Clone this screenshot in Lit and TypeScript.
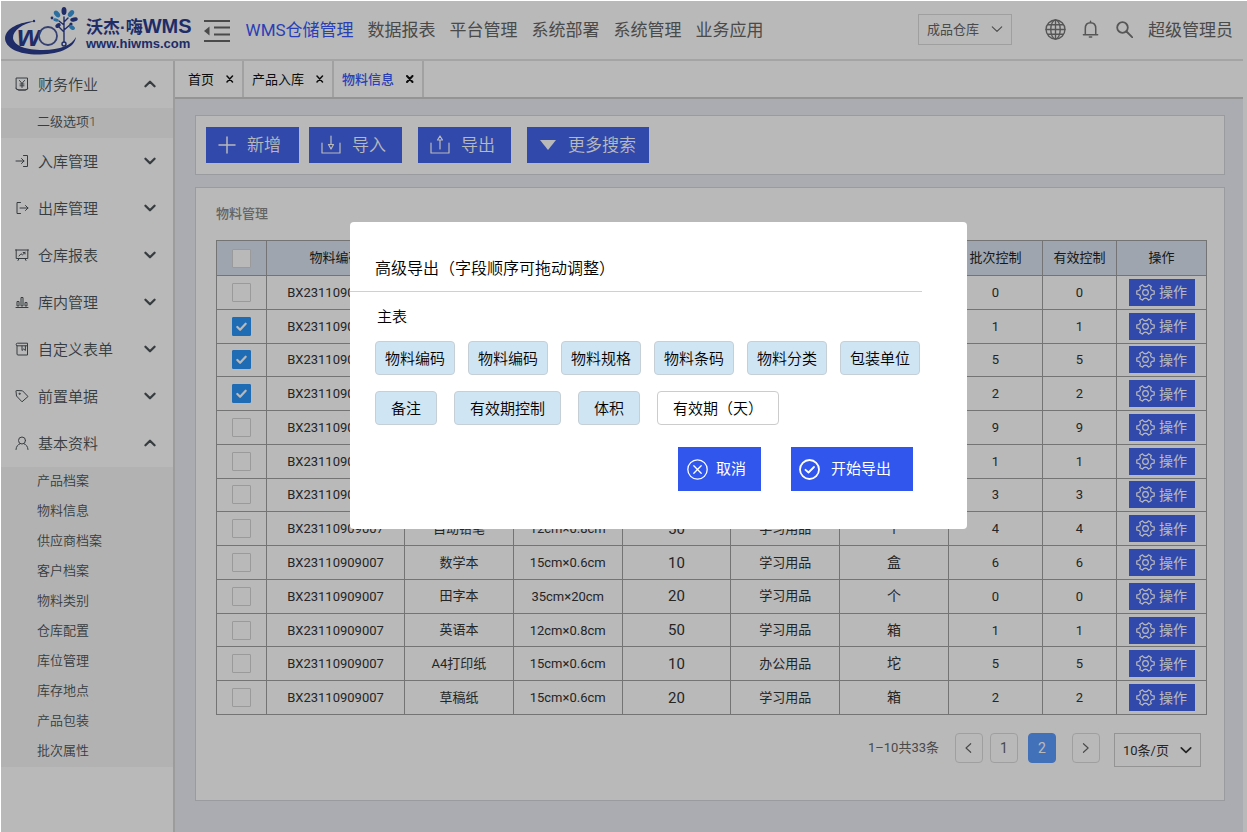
import { LitElement, html, svg, css, nothing } from "lit";
import { customElement, property, state } from "lit/decorators.js";
import { classMap } from "lit/directives/class-map.js";

const stroke = (body: unknown, size = 14, width = 1, box = 14) => html`
  <svg width=${size} height=${size} viewBox="0 0 ${box} ${box}" fill="none" stroke="currentColor"
    stroke-width=${width} stroke-linecap="round" stroke-linejoin="round" aria-hidden="true">${body}</svg>`;

const menuIcons: Record<string, unknown> = {
  finance: svg`<path d="M1.500 1h11v11L10 13H4l-2.500-1z M1 11.500l2 1.500h8l2-1.500M4.500 3.500L7 6.500l2.500-3M7 6.500V10.500M5 7h4M5 8.800h4"/>`,
  inbound: svg`<path d="M1 7h8M6.500 4.500L9 7 6.500 9.500M8.500 1.500h4v11h-4"/>`,
  outbound: svg`<path d="M5.500 1.500h-3.500v11h3.500M5 7h8M10.500 4.500L13 7l-2.500 2.500"/>`,
  report: svg`<path d="M.5 2h13M1.200 2v8.500h11.600V2M4 8l2-2.200 1.500 1L10 4.500M8.200 4.500H10V6M4 10.500l-1 2M10 10.500l1 2"/>`,
  inside: svg`<path d="M1 12.500h12M2 10.500v-4h2v4zM6 10.500v-8h2v8zM10 10.500v-3h2v3z"/>`,
  form: svg`<path d="M2 3.500V12a1 1 0 0 0 1 1h9.500V3.800H2.500a1.200 1.200 0 0 1 0-2.600h10v2.600M7 4v4.500l1.700-1.500 1.700 1.500V4"/>`,
  tag: svg`<path d="M1 2.200L1.500 7l5.500 5.800 6-5.300L7.500 1.800 2 1.500z"/><circle cx="4.500" cy="4.800" r=".6"/>`,
  user: svg`<circle cx="7" cy="4.500" r="3.500"/><path d="M1 13.500c.2-3 1.800-5 4-5.700M13 13.500c-.2-3-1.800-5-4-5.700"/>`,
};

const gear = html`
  <svg width="19" height="19" viewBox="0 0 24 24" fill="none" stroke="currentColor" stroke-width="1.500" aria-hidden="true">
    <path d="M9.800 4.200 8.300 2.300 4.700 4.400l.9 2.300c-.1 1.600-1 2.700-2.500 3L1 10v4l2.200.4c1.500.4 2.300 1.400 2.400 2.900l-.9 2.300 3.600 2.100 1.500-1.900c1.400-.9 3-.9 4.400 0l1.500 1.900 3.600-2.100-.9-2.300c.1-1.500.9-2.500 2.400-2.900L23 14v-4l-2.100-.300c-1.500-.3-2.400-1.400-2.500-3l.9-2.300-3.600-2.100-1.500 1.900c-1.400.9-3 .9-4.400 0z" stroke-linejoin="round"/>
    <circle cx="12" cy="12" r="3.600"/>
  </svg>`;

const logo = html`
  <svg class="logo-mark" width="74" height="48" viewBox="0 0 74 48" aria-hidden="true">
    <path fill="#2c3d90" d="M31 14C14 15 1 21 0 31c0 10 14 17 35 16.500C56 47 70 40 71 30c-4 8-16 13-33 13C21 43 9 39 8 31c0-8 9-14 23-17z"/>
    <circle cx="29" cy="14" r="1.200" fill="#2c3d90"/>
    <text x="12" y="39" font-family="Liberation Sans, sans-serif" font-style="italic" font-weight="bold" font-size="30" fill="#2c3d90">w</text>
    <circle cx="43" cy="29" r="9" fill="none" stroke="#4a5a9c" stroke-width="1.800"/>
    <g fill="none" stroke="#2c3d90" stroke-width="1.400" stroke-linecap="round">
      <path d="M59 35V10M59 25l-5-5M59 23l7-6M59 18l-5-4M59 15l4-4" />
      <circle cx="59" cy="37" r="2"/>
    </g>
    <g fill="#2c3d90">
      <ellipse cx="59" cy="4" rx="2.500" ry="4"/>
      <ellipse cx="69" cy="12.500" rx="3.800" ry="2" transform="rotate(-12 69 12.500)"/>
      <ellipse cx="53" cy="18.500" rx="3" ry="2" transform="rotate(-35 53 18.500)"/>
      <circle cx="47" cy="11" r="1.400"/>
      <circle cx="66" cy="17" r="1.600"/>
    </g>
    <g fill="#3a99dc">
      <ellipse cx="52" cy="7" rx="2.500" ry="3.800" transform="rotate(-40 52 7)"/>
      <ellipse cx="66" cy="6.500" rx="2.500" ry="3.800" transform="rotate(40 66 6.500)"/>
      <ellipse cx="51" cy="13" rx="2.800" ry="1.500" transform="rotate(12 51 13)"/>
      <ellipse cx="67" cy="20.500" rx="3.200" ry="2" transform="rotate(35 67 20.500)"/>
    </g>
  </svg>`;

const family = css`"Roboto", "Noto Sans CJK SC", sans-serif`;

const reset = css`
  *, *::before, *::after { box-sizing: border-box; }
  button, input, select { font: inherit; color: inherit; margin: 0; }
  button { cursor: pointer; border: 0; background: none; padding: 0; }
  a { color: inherit; text-decoration: none; }
  ul { list-style: none; margin: 0; padding: 0; }
  svg { display: block; flex: none; }
`;

@customElement("select-box")
class SelectBox extends LitElement {
  @property() label = "";
  @property() value = "";
  @property({ type: Boolean }) strong = false;

  static styles = [reset, css`
    :host { display: grid; border: 1px solid #dcdcdc; font-size: 13px; }
    select {
      grid-area: 1 / 1; width: 100%; height: 100%; border: 0; padding: 0 26px 0 8px;
      background: transparent; appearance: none; border-radius: 0;
    }
    svg { grid-area: 1 / 1; align-self: center; justify-self: end; margin-right: 8px; pointer-events: none; }
  `];

  render() {
    return html`
      <select aria-label=${this.label}><option>${this.value}</option></select>
      ${stroke(svg`<path d="M1.500 4.500L7 9.800l5.500-5.300"/>`, 12, this.strong ? 2 : 1.3)}`;
  }
}

interface MenuGroup { icon: string; text: string; children?: string[]; }

@customElement("side-menu")
class SideMenu extends LitElement {
  private groups: MenuGroup[] = [
    { icon: "finance", text: "财务作业", children: ["二级选项1"] },
    { icon: "inbound", text: "入库管理" },
    { icon: "outbound", text: "出库管理" },
    { icon: "report", text: "仓库报表" },
    { icon: "inside", text: "库内管理" },
    { icon: "form", text: "自定义表单" },
    { icon: "tag", text: "前置单据" },
    {
      icon: "user", text: "基本资料",
      children: ["产品档案", "物料信息", "供应商档案", "客户档案", "物料类别", "仓库配置", "库位管理", "库存地点", "产品包装", "批次属性"],
    },
  ];

  static styles = [reset, css`
    :host { display: block; width: 174px; border-right: 2px solid #d8d8d8; color: #4c5458; font-weight: 350; }
    .group {
      display: flex; align-items: center; width: 100%; height: 47px;
      padding: 0 15px 2px 14px; font-size: 15px; text-align: left;
    }
    .name { flex: 1; margin-left: 9px; }
    .sub { background: #f6f6f6; font-size: 13px; }
    .sub a { display: block; line-height: 28px; padding: 0 0 2px 36px; }
  `];

  render() {
    return html`<nav>
      ${this.groups.map(g => html`
        <button class="group" aria-expanded=${g.children ? "true" : "false"}>
          ${stroke(menuIcons[g.icon])}
          <span class="name">${g.text}</span>
          ${stroke(g.children ? svg`<path d="M3 9l4-4 4 4"/>` : svg`<path d="M3 5l4 4 4-4"/>`, 16, 2)}
        </button>
        ${g.children ? html`<ul class="sub">${g.children.map(c => html`<li><a href="#">${c}</a></li>`)}</ul>` : nothing}
      `)}
    </nav>`;
  }
}

interface Row {
  checked?: boolean; name?: string; spec?: string; qty?: string;
  kind?: string; unit?: string; count: number;
}

@customElement("material-table")
class MaterialTable extends LitElement {
  @state() private rows: Row[] = [
    { count: 0 },
    { count: 1, checked: true },
    { count: 5, checked: true },
    { count: 2, checked: true },
    { count: 9 },
    { count: 1 },
    { count: 3 },
    { name: "自动铅笔", spec: "12cm×0.8cm", qty: "50", kind: "学习用品", unit: "个", count: 4 },
    { name: "数学本", spec: "15cm×0.6cm", qty: "10", kind: "学习用品", unit: "盒", count: 6 },
    { name: "田字本", spec: "35cm×20cm", qty: "20", kind: "学习用品", unit: "个", count: 0 },
    { name: "英语本", spec: "12cm×0.8cm", qty: "50", kind: "学习用品", unit: "箱", count: 1 },
    { name: "A4打印纸", spec: "15cm×0.6cm", qty: "10", kind: "办公用品", unit: "坨", count: 5 },
    { name: "草稿纸", spec: "15cm×0.6cm", qty: "20", kind: "学习用品", unit: "箱", count: 2 },
  ];

  static styles = [reset, css`
    :host { display: block; color: #333; font-size: 13px; }
    table { width: 100%; height: 475px; border-collapse: collapse; table-layout: fixed; }
    th, td { border: 1px solid #a0a0a0; padding: 2px 0; text-align: center; font-weight: 400; }
    th { height: 35px; background: #dae4f1; color: #222; padding: 0 0 3px; }
    th:first-child { padding: 2px 0; }
    .c-check { width: 50px; }
    .c-code { width: 138px; }
    .c-count { width: 94px; }
    .c-valid { width: 74px; }
    .c-action { width: 90px; }
    .cjk { padding: 0 0 3px; }
    .qty { font-size: 15px; }
    .unit { font-size: 14px; }
    input {
      display: block; width: 19px; height: 19px; margin: 0 auto; appearance: none;
      background: #fff; border: 1px solid #d4d4d4; border-radius: 1px;
    }
    input:checked { border-color: #2b94f8; background: #2b94f8; }
    .tick { display: grid; justify-items: center; align-items: center; }
    .tick input, .tick svg { grid-area: 1 / 1; }
    .tick svg { color: #fff; pointer-events: none; }
    .op {
      display: flex; align-items: center; justify-content: center; gap: 4px; width: 66px; height: 27px;
      margin: 0 auto; background: #4565ee; color: #fff; font-size: 14px; line-height: 18px;
    }
  `];

  private check(label: string, checked = false) {
    return html`<label class="tick">
      <input type="checkbox" aria-label=${label} .checked=${checked}>
      ${checked ? stroke(svg`<path d="M2.500 7.500l3 3 6-6.500"/>`, 13, 2.4) : nothing}
    </label>`;
  }

  render() {
    return html`<table>
      <colgroup>
        <col class="c-check"><col class="c-code"><col><col><col><col><col>
        <col class="c-count"><col class="c-valid"><col class="c-action">
      </colgroup>
      <thead><tr>
        <th>${this.check("全选")}</th><th>物料编码</th><th></th><th></th><th></th><th></th><th></th>
        <th>批次控制</th><th>有效控制</th><th>操作</th>
      </tr></thead>
      <tbody>
        ${this.rows.map(r => html`<tr>
          <td>${this.check("选择", r.checked)}</td>
          <td>BX23110909007</td>
          <td class="cjk">${r.name}</td>
          <td>${r.spec}</td>
          <td class="qty">${r.qty}</td>
          <td class="cjk">${r.kind}</td>
          <td class="cjk unit">${r.unit}</td>
          <td>${r.count}</td>
          <td>${r.count}</td>
          <td><button class="op">${gear}<span>操作</span></button></td>
        </tr>`)}
      </tbody>
    </table>`;
  }
}

@customElement("export-dialog")
class ExportDialog extends LitElement {
  static styles = [reset, css`
    :host {
      display: block; width: 617px; padding: 35px 45px 38px 0; border-radius: 4px;
      background: #fff; color: #000; font-size: 15px; font-weight: 350;
    }
    h2 {
      margin: 0; padding: 0 0 10px 25px; border-bottom: 1px solid #d0d0d0;
      font-size: 16px; font-weight: 350; line-height: 24px;
    }
    h3 { margin: 14px 0 13px 27px; font-size: 15px; font-weight: 350; line-height: 22px; }
    .fields { display: flex; margin: 0 2px 16px 25px; }
    .main { justify-content: space-between; }
    .more { gap: 17px; }
    .chip {
      height: 34px; padding: 0 9px 2px; border: 1px solid #c6cfd6; border-radius: 4px; background: #d0e5f4;
      white-space: nowrap; cursor: move;
    }
    .more .chip { padding: 0 15px 2px; }
    .more .off { background: #fff; border-color: #ccc; }
    .actions { display: flex; justify-content: flex-end; gap: 30px; margin: 22px 9px 0 0; }
    .action {
      display: flex; align-items: center; gap: 8px; height: 44px; padding: 0 15px 0 9px;
      background: #3056ee; color: #fff; font-weight: 400;
    }
    .action span { padding-bottom: 3px; }
    .primary { gap: 11px; padding: 0 22px 0 8px; }
  `];

  render() {
    const main = ["物料编码", "物料编码", "物料规格", "物料条码", "物料分类", "包装单位"];
    const more = ["备注", "有效期控制", "体积", "有效期（天）"];
    return html`
      <h2>高级导出（字段顺序可拖动调整）</h2>
      <h3>主表</h3>
      <div class="fields main">${main.map(t => html`<button class="chip" draggable="true">${t}</button>`)}</div>
      <div class="fields more">${more.map((t, i) => html`
        <button class=${classMap({ chip: true, off: i === 3 })} draggable="true">${t}</button>`)}</div>
      <div class="actions">
        <button class="action">
          ${stroke(svg`<circle cx="10.500" cy="10.500" r="9.700"/><path d="M6.800 6.800l7.400 7.400M14.200 6.800l-7.400 7.400"/>`, 21, 1.3, 21)}<span>取消</span>
        </button>
        <button class="action primary">
          ${stroke(svg`<circle cx="10.500" cy="10.500" r="9.500"/><path d="M6.500 10.800l3 2.700 5.500-5.500"/>`, 21, 1.8, 21)}<span>开始导出</span>
        </button>
      </div>`;
  }
}

@customElement("app-root")
class AppRoot extends LitElement {
  @state() private nav = ["WMS仓储管理", "数据报表", "平台管理", "系统部署", "系统管理", "业务应用"];
  @state() private tabs = ["首页", "产品入库", "物料信息"];

  static styles = [reset, css`
    :host {
      display: flex; flex-direction: column; position: relative; min-height: 100vh; box-sizing: border-box;
      padding: 1px 4px 0 1px; background: #fff; color: #333; font-family: ${family};
    }
    .top {
      display: flex; align-items: center; height: 60px; padding: 0 10px 2px 4px;
      border-bottom: 2px solid #e2e2e2; color: #666; font-size: 17px;
    }
    .brand { display: flex; align-items: center; gap: 7px; color: #2c3d90; font-family: "Liberation Sans", "Noto Sans CJK SC", sans-serif; font-weight: 700; }
    .logo-mark { margin-top: 4px; }
    .brand-name { display: block; font-size: 17px; line-height: 18px; white-space: nowrap; margin-top: 10px; font-weight: 600; }
    .brand-wms { font-size: 20px; }
    .brand-site { display: block; font-size: 13px; line-height: 14px; }
    .fold { margin: 4px 16px 0 12px; color: #666; }
    .nav { display: flex; gap: 14px; flex: 1; white-space: nowrap; padding-bottom: 2px; }
    .account { padding-bottom: 2px; }
    .current { color: #3a58fd; }
    .warehouse { width: 94px; height: 31px; margin-right: 33px; }
    .tools { display: flex; align-items: center; gap: 16px; margin-right: 15px; color: #777; }
    .body { display: flex; flex: 1; }
    .work { display: flex; flex-direction: column; flex: 1; min-width: 0; background: #ecedf4; }
    .tabs { display: flex; height: 38px; background: #fff; border-bottom: 2px solid #ccc; font-size: 13px; color: #111; }
    .tab { display: flex; align-items: center; gap: 12px; padding: 0 8px 0 8px; border-right: 2px solid #dedede; }
    .tab a { padding-bottom: 1px; }
    .tab:first-child { padding-left: 13px; }
    .tab.current { color: #3a58fd; font-weight: 500; }
    .tab button { color: #111; }
    .content { display: flex; flex-direction: column; gap: 12px; padding: 16px 18px 31px 20px; flex: 1; }
    .card { background: #fff; border: 1px solid #d4d6da; }
    .toolbar { display: flex; gap: 16px; padding: 11px 11px 11px 10px; }
    .tool-group { display: flex; gap: 10px; }
    .tool {
      display: flex; align-items: center; gap: 11px; min-width: 93px; height: 36px; padding: 0 13px 0 12px;
      background: #4565ee; color: #fff; font-size: 17px; font-weight: 350;
    }
    .tool span { padding-bottom: 3px; }
    .panel { flex: 1; padding: 16px 17px 20px 20px; }
    .heading { margin: 0 0 16px; font-size: 13px; font-weight: 500; line-height: 20px; color: #8a8a8a; }
    .pager { display: flex; align-items: flex-start; justify-content: flex-end; margin: 18px 6px 0 0; font-size: 13px; color: #666; }
    .page { display: grid; place-items: center; width: 28px; height: 30px; margin-left: 7px; border: 1px solid #dcdcdc; border-radius: 4px; font-size: 14px; }
    .page.active { margin: 0 9px 0 10px; background: #5c9cff; border-color: #5c9cff; color: #fff; }
    .total { margin-right: 9px; line-height: 30px; }
    .size { width: 87px; height: 34px; margin-left: 14px; color: #333; border-color: #ccc; }
    .mask { position: absolute; inset: 1px 0 0 1px; background: rgba(0, 0, 0, 0.275); }
    .dialog { position: absolute; top: 221px; left: 349px; }
  `];

  render() {
    return html`
      <header class="top">
        <a class="brand" href="#">
          ${logo}
          <span>
            <span class="brand-name">沃杰·嗨<span class="brand-wms">WMS</span></span>
            <span class="brand-site">www.hiwms.com</span>
          </span>
        </a>
        <button class="fold" aria-label="折叠菜单">
          <svg width="26" height="24" viewBox="0 0 26 24" fill="none" stroke="currentColor" stroke-width="2">
            <path d="M0 2h26M10 8.500h16M10 15.500h16M0 22h26"/><path d="M0 12l5.500-4.500v9z" fill="currentColor" stroke="none"/>
          </svg>
        </button>
        <nav class="nav">${this.nav.map((t, i) => html`<a href="#" class=${classMap({ current: i === 0 })}>${t}</a>`)}</nav>
        <select-box class="warehouse" label="仓库" value="成品仓库"></select-box>
        <div class="tools">
          <button aria-label="语言">${stroke(svg`<circle cx="10" cy="10" r="9"/><ellipse cx="10" cy="10" rx="4.500" ry="9"/><path d="M10 1v18M1 10h18M2.500 5.500h15M2.500 14.500h15"/>`, 21, 1.3, 20)}</button>
          <button aria-label="通知">${stroke(svg`<path d="M1.500 15.500h15M3.500 15V9c0-3.500 2-6 5.500-6s5.500 2.500 5.500 6v6M9 1.200V3M7.800 18h2.400"/>`, 18, 1.6, 19)}</button>
          <button aria-label="搜索">${stroke(svg`<circle cx="6.500" cy="6.500" r="5.300"/><path d="M10.500 10.500l6 6"/>`, 17, 1.8, 17)}</button>
        </div>
        <span class="account">超级管理员</span>
      </header>
      <div class="body">
        <side-menu></side-menu>
        <div class="work">
          <div class="tabs">
            ${this.tabs.map((t, i) => html`
              <div class=${classMap({ tab: true, current: i === 2 })}>
                <a href="#">${t}</a>
                <button aria-label="关闭${t}">${stroke(svg`<path d="M1 1l5.500 6M6.500 1L1 7"/>`, 8, i === 2 ? 2 : 1.5, 8)}</button>
              </div>`)}
          </div>
          <main class="content">
            <div class="card toolbar">
              <div class="tool-group">
                <button class="tool">${stroke(svg`<path d="M9 1v16M1 9h16"/>`, 18, 1.5, 18)}<span>新增</span></button>
                <button class="tool">${stroke(svg`<path d="M1 8v10h18V8M10 1v8M7.500 9.500h5L10 14z"/>`, 20, 1.2, 20)}<span>导入</span></button>
              </div>
              <button class="tool">${stroke(svg`<path d="M1 8v10h18V8M10 14V5M7.500 5h5L10 1z"/>`, 20, 1.2, 20)}<span>导出</span></button>
              <button class="tool">${html`<svg width="18" height="12" viewBox="0 0 18 12" aria-hidden="true"><path d="M1 1h16L9 11z" fill="currentColor"/></svg>`}<span>更多搜索</span></button>
            </div>
            <section class="card panel">
              <h1 class="heading">物料管理</h1>
              <material-table></material-table>
              <div class="pager">
                <span class="total">1–10共33条</span>
                <button class="page" aria-label="上一页">${stroke(svg`<path d="M9 2L3.500 7 9 12"/>`, 12, 1.3)}</button>
                <button class="page">1</button>
                <button class="page active">2</button>
                <button class="page" aria-label="下一页">${stroke(svg`<path d="M4 2L9.500 7 4 12"/>`, 12, 1.3)}</button>
                <select-box class="size" label="每页条数" value="10条/页" strong></select-box>
              </div>
            </section>
          </main>
        </div>
      </div>
      <div class="mask"><export-dialog class="dialog" role="dialog" aria-label="高级导出"></export-dialog></div>`;
  }
}
